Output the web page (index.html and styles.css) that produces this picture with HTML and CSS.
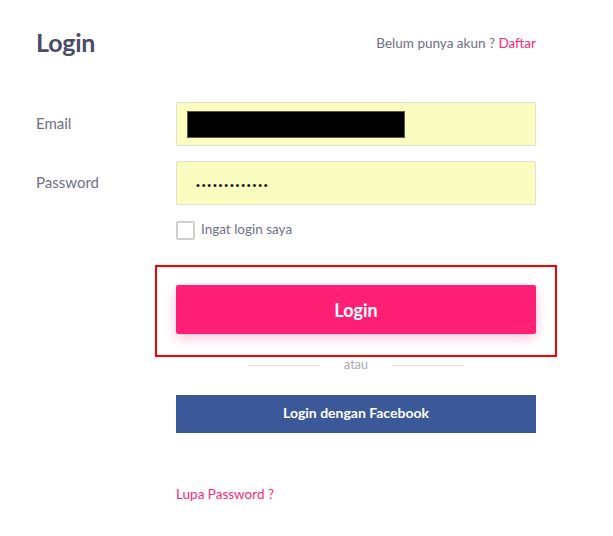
FILE: index.html
```html
<!DOCTYPE html>
<html>
<head>
<meta charset="utf-8">
<link rel="stylesheet" href="styles.css">
</head>
<body>
<div class="page">
  <div class="header">
    <h1 class="title">Login</h1>
    <div class="signup">Belum punya akun ? <a class="pink" href="#">Daftar</a></div>
  </div>
  <div class="row email-row">
    <label class="label">Email</label>
    <div class="input"><span class="redact"></span></div>
  </div>
  <div class="row pass-row">
    <label class="label">Password</label>
    <div class="input"><span class="dots">•••••••••••••</span></div>
  </div>
  <div class="remember">
    <span class="check"></span>
    <span class="remember-text">Ingat login saya</span>
  </div>
  <div class="highlight">
    <button class="btn-login">Login</button>
  </div>
  <div class="divider">
    <span class="line"></span>
    <span class="or">atau</span>
    <span class="line"></span>
  </div>
  <button class="btn-fb">Login dengan Facebook</button>
  <a class="forgot pink" href="#">Lupa Password ?</a>
</div>
</body>
</html>
```
FILE: styles.css
```css
* { box-sizing: border-box; }
html, body { margin: 0; padding: 0; background: #fff; }
body { font-family: Lato, "Open Sans", sans-serif; }
.page { width: 613px; padding: 0 0 0 36px; }
.header { display: flex; align-items: center; justify-content: space-between; width: 500px; height: 48px; margin-top: 18px; }
.title { margin: 0; font-size: 25px; font-weight: 700; color: #4b4a6b; letter-spacing: -0.2px; }
.signup { font-size: 13.5px; color: #6e6d86; padding-top: 1px; }
.pink { color: #ff2876; text-decoration: none; }
.row { display: flex; align-items: center; width: 500px; }
.email-row { margin-top: 36px; }
.pass-row { margin-top: 15px; }
.label { width: 140px; font-size: 15px; color: #6e7088; margin-top: -2px; }
.input { width: 360px; height: 44px; background: #fafdbf; border: 1px solid #dedfd0; border-radius: 2px; display: flex; align-items: center; padding-left: 10px; }
.redact { display: block; width: 218px; height: 27px; background: #000; border: 1px solid #5a5a40; margin-top: 1px; }
.dots { font-family: "Liberation Sans", sans-serif; font-size: 11px; letter-spacing: 1.8px; color: #111; padding-left: 9px; padding-top: 3px; }
.remember { display: flex; align-items: center; margin: 15px 0 0 140px; height: 20px; }
.check { width: 19px; height: 19px; border: 2px solid #cfcfcf; border-radius: 2px; background: #fff; }
.remember-text { margin-left: 6px; font-size: 13.5px; color: #6e7088; margin-top: -3px; }
.highlight { margin: 25px 0 0 119px; width: 402px; border: 2px solid #ff0000; padding: 18px 19px 21px 19px; }
.btn-login { display: block; width: 360px; height: 49px; border: 0; border-radius: 2px; background: #ff1f75; color: #fff; font-family: Lato, sans-serif; font-size: 18px; font-weight: 700; box-shadow: 0 4px 12px rgba(255, 31, 117, 0.28); padding: 0; }
.divider { display: flex; align-items: center; margin-left: 212px; width: 216px; height: 16px; margin-top: 0; }
.line { width: 72px; height: 1px; background: #dcdcdc; }
.or { width: 72px; text-align: center; font-size: 12.5px; color: #a9a9b4; margin-top: -1px; }
.btn-fb { display: block; margin: 22px 0 0 140px; width: 360px; height: 38px; border: 0; background: #3b5998; color: #fff; font-family: Lato, sans-serif; font-size: 14px; font-weight: 700; padding: 0 0 3px 0; }
.forgot { display: inline-block; margin: 53px 0 0 140px; font-size: 13.5px; }
```
